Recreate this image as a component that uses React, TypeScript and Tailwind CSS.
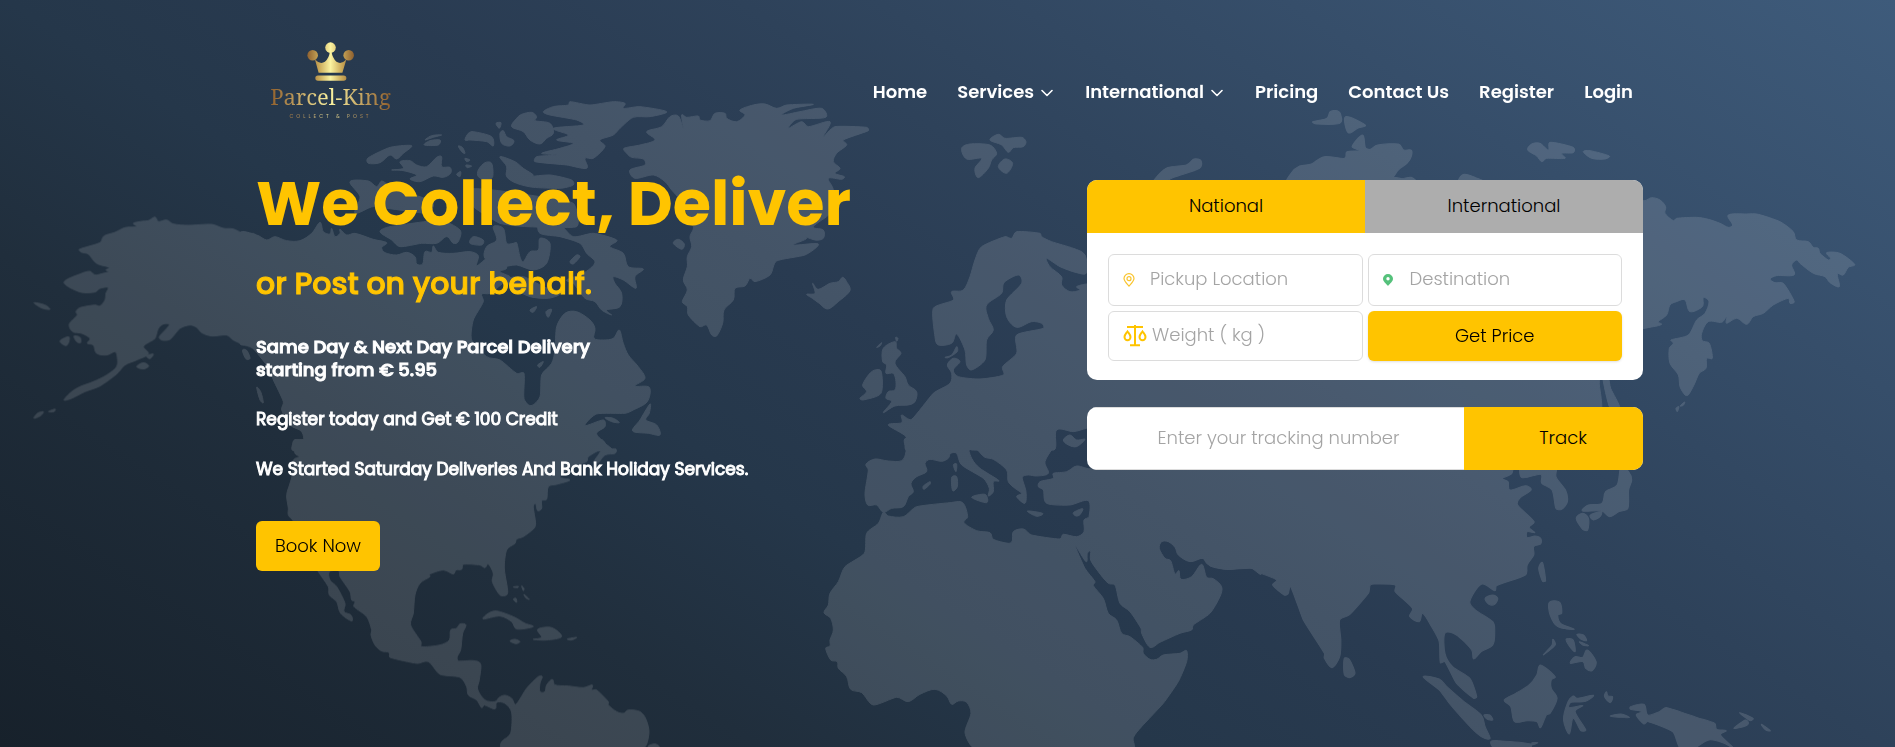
import { useState } from "react";

const alaska = [
  "M238,508 L300,488 L312,468 L345,457 L375,443 L410,440 L400,430 L425,424 L445,422 L465,411 L475,425 L500,420 L520,432 L565,436 L635,433 L670,445 L700,447 L735,463 L765,465 L765,800 L740,797 L700,780 L680,765 L635,768 L605,758 L590,742 L570,735 L540,745 L510,778 L485,780 L478,770 L508,735 L490,732 L475,745 L465,775 L450,785 L430,800 L445,822 L410,840 L375,855 L350,882 L300,918 L255,935 L215,955 L192,960 L215,935 L240,920 L280,905 L320,885 L350,860 L352,832 L345,815 L320,825 L290,820 L280,795 L262,790 L270,775 L245,760 L218,755 L208,732 L232,705 L228,695 L240,683 L285,675 L300,678 L315,660 L318,640 L325,622 L300,625 L285,636 L240,636 L192,607 L245,580 L270,574 L285,585 L310,580 L328,575 L318,570 L328,562 L290,550 L265,522 L245,517Z",
  "M102,668 L135,675 L150,688 L125,684Z M180,783 L205,770 L207,783 L198,797Z M102,1015 L112,1000 L130,995 L122,1007Z M145,995 L165,987 L162,995Z M410,860 L430,848 L446,858 L430,867Z M440,828 L460,822 L450,836Z M222,768 L240,772 L242,788 L230,785Z M728,810 L740,812 L748,835 L738,836Z",
];

const canada = [
  "M0,460 L50,465 L80,480 L105,470 L140,482 L180,482 L215,460 L240,427 L250,455 L270,462 L275,445 L285,470 L300,460 L300,448 L320,465 L345,460 L400,478 L440,488 L425,503 L435,518 L470,525 L500,517 L525,530 L530,552 L548,552 L555,515 L575,517 L580,498 L595,517 L640,520 L690,515 L715,527 L710,557 L740,535 L755,530 L790,545 L800,565 L780,575 L810,590 L800,600 L750,640 L725,642 L730,665 L700,720 L695,780 L740,830 L780,840 L830,880 L852,880 L852,955 L873,977 L900,950 L905,885 L935,850 L945,810 L950,740 L975,700 L1010,695 L1050,720 L1065,745 L1062,775 L1090,780 L1120,775 L1138,750 L1150,790 L1165,825 L1195,860 L1215,895 L1185,918 L1228,922 L1222,965 L1180,990 L1155,1000 L1070,1002 L1035,1037 L1090,1020 L1095,1040 L1070,1060 L1090,1085 L1115,1112 L160,1112 L165,1080 L190,1090 L185,1055 L150,1035 L125,990 L130,965 L100,900 L90,870 L60,830 L30,797 L0,790Z",
  "M1230,972 L1228,1000 L1218,1020 L1250,1035 L1260,1065 L1225,1060 L1178,1053 L1200,1020Z M1095,1013 L1120,1015 L1138,1028 L1115,1025Z M8,812 L20,812 L30,835 L18,836Z M50,922 L62,935 L70,968 L60,960Z",
  "M330,305 L385,303 L410,320 L425,303 L445,315 L500,340 L540,350 L580,370 L560,400 L400,380 L345,400 L360,350Z",
  "M420,455 L450,440 L600,420 L660,450 L655,485 L640,490 L620,470 L590,490 L545,490 L480,500 L455,480Z",
  "M455,270 L490,265 L480,245 L510,242 L530,255 L560,260 L590,232 L605,230 L605,260 L630,262 L632,280 L610,292 L580,288 L540,305 L510,297 L530,285 L490,272Z",
  "M383,235 L430,210 L460,200 L515,197 L490,220 L470,237 L450,225 L420,248 L385,250Z M553,195 L570,182 L600,180 L595,195Z M555,180 L575,167 L605,165 L580,172Z",
  "M675,180 L685,160 L700,155 L755,170 L760,198 L740,185 L690,180Z M780,160 L790,152 L800,170 L822,182 L810,198 L785,190Z M768,130 L783,128 L778,145Z M655,198 L668,203 L675,220 L665,215Z M675,235 L690,240 L680,245Z M678,255 L695,258 L682,263Z M650,283 L662,275 L660,290Z",
  "M715,270 L735,248 L755,250 L758,290 L740,300 L715,290Z M780,230 L825,245 L850,265 L880,285 L865,290 L930,285 L995,300 L1000,315 L960,325 L880,322 L830,310 L800,290 L800,260Z",
  "M815,140 L830,115 L845,103 L875,97 L890,110 L885,122 L930,130 L940,160 L920,175 L900,192 L870,180 L850,155Z",
  "M910,95 L940,80 L985,75 L990,65 L1050,75 L1120,65 L1155,70 L1150,85 L1200,80 L1280,95 L1230,110 L1180,112 L1140,145 L1120,165 L1080,180 L1095,200 L1060,235 L1035,235 L1040,265 L980,255 L885,245 L890,230 L950,225 L905,220 L960,205 L1000,190 L950,180 L985,165 L940,145 L1030,135 L1010,120 L930,105Z",
  "M680,330 L760,330 L900,350 L1000,370 L1010,440 L860,440 L780,430 L700,380Z",
  "M900,430 L960,435 L1000,470 L1060,460 L1130,480 L1110,500 L1150,520 L1165,560 L1210,567 L1185,590 L1188,625 L1150,600 L1120,590 L1125,610 L1145,640 L1140,680 L1100,690 L1115,705 L1085,690 L1065,665 L1035,655 L1000,610 L980,600 L1030,580 L1065,548 L1040,520 L1020,490 L960,470 L900,460Z",
  "M820,490 L830,488 L840,530 L850,545 L870,515 L895,510 L900,475 L930,490 L920,550 L880,570 L830,555 L780,560 L735,535 L740,500 L770,480 L760,440 L790,445 L800,490Z",
  "M800,598 L850,590 L910,620 L960,640 L925,655 L870,650 L820,625Z M870,690 L890,680 L880,697Z M918,695 L935,688 L925,712Z M690,490 L700,470 L730,480 L725,495Z M990,545 L1010,525 L1020,530 L1000,552Z M1300,490 L1315,478 L1333,492 L1325,508Z M893,855 L910,845 L900,862Z",
];

const atlantic = [
  "M72,205 L120,195 L165,180 L140,155 L185,140 L210,110 L235,108 L250,145 L245,105 L260,112 L295,108 L300,120 L330,122 L345,100 L375,100 L380,115 L410,125 L435,105 L420,90 L460,75 L495,72 L530,85 L560,75 L640,73 L580,85 L545,105 L600,95 L665,85 L677,112 L590,118 L565,145 L605,125 L625,140 L690,125 L670,170 L705,140 L800,142 L805,152 L730,180 L740,195 L710,220 L700,245 L720,265 L705,280 L733,290 L725,298 L685,295 L700,330 L690,400 L640,440 L670,450 L670,475 L645,480 L590,460 L620,475 L580,495 L655,492 L615,525 L530,543 L510,585 L465,605 L450,595 L435,618 L405,625 L400,660 L372,690 L368,730 L350,768 L335,765 L320,735 L300,740 L265,705 L262,680 L247,665 L262,630 L250,600 L262,560 L262,530 L275,500 L270,470 L280,440 L240,360 L215,330 L195,305 L160,285 L105,295 L90,270 L135,255 L130,237 L95,232 L80,220Z",
  "M620,643 L645,640 L638,610 L655,628 L690,610 L715,605 L728,592 L740,605 L750,632 L715,665 L683,687 L655,668 L637,655Z",
  "M1085,205 L1110,192 L1170,195 L1190,220 L1175,240 L1165,265 L1135,293 L1125,265 L1145,235 L1100,237Z M1170,180 L1195,163 L1215,175 L1265,172 L1278,185 L1270,200 L1240,203 L1225,217 L1205,195Z M1195,260 L1215,237 L1238,250 L1220,280Z",
  "M850,805 L885,785 L890,805 L903,820 L885,850 L915,890 L925,915 L950,935 L945,965 L925,975 L885,978 L850,998 L875,965 L858,955 L865,935 L885,930 L888,905 L880,880 L858,880 L860,855 L848,845Z M780,955 L800,935 L788,915 L815,875 L843,873 L843,940 L790,960Z M830,802 L845,788 L840,798Z M887,772 L894,775 L890,784Z",
  "M1035,832 L1055,825 L1070,800 L1072,815 L1045,833Z",
  "M1000,685 L1060,660 L1055,635 L1090,630 L1110,590 L1125,540 L1145,500 L1215,470 L1235,475 L1250,455 L1320,460 L1325,470 L1355,485 L1420,505 L1455,525 L1460,578 L1430,578 L1380,560 L1340,535 L1350,560 L1385,590 L1385,615 L1410,635 L1440,630 L1430,620 L1460,612 L1500,612 L1500,1040 L1460,1045 L1420,1055 L1370,1050 L1362,1110 L1115,1110 L1105,1083 L1110,1110 L920,1110 L918,1070 L865,1035 L905,1028 L905,1005 L935,1018 L1000,940 L1050,910 L1055,880 L1042,855 L1060,835 L1080,845 L1060,870 L1075,890 L1140,897 L1210,885 L1208,860 L1250,820 L1250,765 L1330,745 L1325,730 L1295,725 L1250,742 L1220,710 L1220,660 L1265,610 L1255,585 L1212,608 L1205,640 L1160,675 L1165,715 L1180,750 L1160,780 L1155,840 L1115,870 L1100,855 L1095,810 L1070,762 L1055,790 L1015,795 L1005,770Z",
  "M1390,1080 L1410,1065 L1430,1080 L1455,1078 L1430,1100 L1405,1095Z",
];

const americas = [
  "M165,0 L165,40 L178,50 L160,60 L158,100 L150,130 L140,165 L145,205 L145,225 L160,243 L232,390 L265,440 L268,465 L290,485 L302,520 L335,543 L333,525 L312,515 L315,490 L290,440 L270,420 L268,395 L295,390 L300,410 L330,455 L335,480 L345,485 L342,500 L380,530 L395,570 L393,585 L405,615 L425,633 L447,637 L450,652 L530,670 L565,665 L600,703 L660,712 L680,740 L685,765 L710,780 L725,803 L733,795 L765,807 L770,787 L795,790 L815,817 L812,880 L785,905 L785,925 L1208,925 L1227,880 L1218,838 L1200,815 L1165,810 L1150,820 L1130,815 L1105,795 L1105,785 L1070,750 L1055,750 L1057,735 L1030,743 L985,738 L945,735 L937,718 L920,735 L915,755 L900,755 L900,730 L907,710 L895,710 L860,745 L828,793 L815,775 L795,766 L778,772 L765,785 L735,780 L713,748 L718,720 L722,672 L700,662 L655,663 L652,650 L662,630 L668,580 L678,555 L660,552 L650,565 L632,570 L628,600 L600,615 L545,620 L543,605 L512,555 L520,520 L525,465 L540,430 L570,410 L568,403 L610,390 L640,402 L648,390 L665,388 L670,373 L720,375 L735,383 L745,372 L760,400 L757,425 L780,465 L800,465 L803,450 L793,385 L800,330 L825,310 L830,297 L850,290 L882,265 L887,250 L880,200 L887,190 L893,212 L905,205 L905,182 L920,178 L925,140 L950,133 L990,120 L960,110 L1000,80 L1040,65 L1045,50 L1083,30 L1060,68 L1075,68 L1095,45 L1125,40 L1128,27 L1105,25 L1085,0Z",
  "M730,537 L745,520 L770,513 L820,530 L855,550 L880,560 L830,567 L815,545 L780,528Z M880,598 L905,592 L893,568 L935,563 L965,590 L920,600Z M810,603 L825,598 L840,605 L828,611Z M982,597 L1010,592 L995,600Z M820,441 L835,439 L833,443Z M845,438 L852,445 L850,452Z M820,478 L828,475 L830,487Z M852,463 L868,478 L858,474Z M1225,918 L1245,912 L1258,921 L1230,925Z",
];

const africa = [
  "M378,-5 L378,35 L365,62 L325,63 L285,57 L258,72 L265,90 L255,160 L263,195 L290,195 L310,217 L335,205 L370,200 L385,170 L400,155 L393,130 L410,110 L440,95 L435,70 L450,58 L485,64 L505,55 L512,40 L530,40 L545,75 L610,115 L628,145 L625,168 L640,155 L640,125 L657,122 L600,85 L575,55 L560,5 L572,5 L600,38 L615,52 L640,58 L680,90 L685,125 L705,145 L725,160 L710,170 L735,190 L738,155 L727,112 L745,105 L770,108 L805,100 L795,65 L820,20 L822,-5Z",
  "M575,172 L615,163 L620,188Z M515,112 L530,110 L532,140 L518,152Z M520,75 L530,72 L528,95Z M430,138 L450,125 L450,133 L432,148Z M742,213 L788,220 L770,229Z M880,218 L908,206 L900,224 L888,228Z",
  "M780,125 L820,115 L820,100 L860,95 L890,78 L935,85 L935,40 L1445,40 L1445,400 L1410,383 L1340,388 L1290,378 L1270,355 L1230,365 L1195,345 L1185,322 L1165,305 L1145,305 L1138,325 L1155,355 L1172,362 L1185,402 L1197,392 L1203,418 L1235,410 L1265,373 L1280,412 L1300,416 L1325,440 L1320,470 L1290,520 L1240,555 L1235,570 L1200,580 L1140,607 L1110,622 L1085,580 L1083,565 L1050,515 L1020,490 L1005,435 L985,430 L955,395 L932,360 L932,333 L922,340 L918,365 L885,315 L915,385 L945,425 L940,437 L970,475 L985,520 L1010,540 L1025,580 L1050,590 L1088,622 L1090,640 L1110,658 L1130,658 L1150,645 L1200,640 L1220,632 L1220,665 L1195,725 L1150,790 L1085,860 L1060,893 L1060,925 L585,925 L555,878 L573,820 L560,787 L535,783 L515,793 L500,768 L465,748 L420,763 L385,785 L350,772 L280,795 L245,758 L212,748 L200,710 L175,685 L172,665 L152,660 L137,625 L150,618 L150,600 L160,570 L152,535 L132,518 L145,495 L150,460 L175,425 L195,380 L253,340 L260,280 L295,250 L310,217 L325,228 L370,230 L410,200 L510,188 L548,188 L563,230 L552,248 L590,272 L630,278 L640,298 L685,310 L697,303 L700,275 L730,267 L755,285 L840,297 L850,283 L890,290 L912,275 L912,240 L927,230 L925,182 L870,195 L800,190 L790,150 L775,140Z",
];

const asia = [
  "M-10,60 L-10,355 L8,355 L20,372 L70,388 L135,385 L160,400 L200,420 L190,435 L220,465 L230,462 L237,440 L270,540 L325,640 L325,655 L345,683 L365,650 L368,600 L365,540 L390,525 L440,460 L445,435 L460,432 L510,435 L510,455 L555,505 L548,530 L573,545 L582,520 L605,560 L625,605 L628,668 L640,665 L670,730 L715,775 L723,770 L705,715 L660,680 L640,640 L640,580 L670,585 L710,630 L715,657 L735,635 L765,615 L770,575 L765,545 L720,510 L705,485 L735,433 L770,452 L775,437 L850,405 L855,375 L872,345 L872,320 L890,312 L890,295 L875,288 L855,293 L855,275 L875,278 L860,262 L873,245 L830,195 L835,175 L865,150 L850,137 L810,150 L805,125 L790,115 L815,100 L820,60 L835,60 L840,112 L890,103 L893,130 L920,150 L930,205 L945,208 L960,185 L955,150 L930,110 L930,60Z",
  "M1100,80 L1120,95 L1128,120 L1120,150 L1118,205 L1095,215 L1070,230 L1050,213 L1000,213 L1015,195 L1050,190 L1060,155 L1090,135Z M983,235 L1000,220 L1015,235 L1013,270 L1000,268Z M1020,225 L1048,215 L1045,230 L1028,240Z",
  "M885,385 L895,368 L903,422 L895,424Z M745,475 L765,465 L778,475 L770,493 L755,493Z M377,655 L390,658 L405,700 L390,713 L377,703Z",
  "M583,710 L625,717 L645,740 L690,785 L735,825 L745,860 L758,895 L740,893 L710,865 L655,795 L625,750Z M742,825 L757,825 L765,840 L750,837Z",
  "M795,780 L825,760 L860,735 L880,705 L890,675 L928,710 L918,720 L918,745 L933,775 L915,820 L905,825 L890,863 L880,845 L855,842 L822,845 L812,800Z",
  "M975,768 L985,775 L1028,766 L1005,785 L970,787 L965,803 L1000,797 L980,815 L1008,870 L995,872 L975,835 L965,882 L950,840 L960,790Z",
  "M913,487 L940,487 L945,520 L935,525 L942,550 L978,568 L935,560 L915,525Z M957,597 L975,600 L980,635 L965,618Z M985,583 L1002,585 L1010,602 L995,597Z M992,605 L1015,617 L1000,615Z M968,670 L980,650 L1000,652 L1012,630 L1035,665 L1025,692 L1008,685 L1000,665Z M897,645 L920,615 L922,598 L928,615Z",
  "M1057,770 L1062,755 L1066,768 L1078,770 L1072,788Z M1072,828 L1100,822 L1122,833 L1095,832Z",
  "M1125,800 L1160,793 L1170,825 L1200,815 L1220,803 L1300,833 L1345,850 L1350,868 L1375,872 L1360,885 L1395,925 L1370,910 L1330,900 L1290,925 L1255,925 L1235,875 L1170,845 L1160,852 L1140,825 L1155,815 L1125,808Z",
  "M1395,865 L1425,840 L1433,848 L1425,858Z M1410,818 L1445,835 L1437,842Z M1467,853 L1490,872 L1478,870Z M760,905 L780,902 L865,912 L860,925 L770,925Z M868,908 L883,908 L870,914Z",
];

const siberia = [
  "M400,212 L435,212 L455,203 L480,210 L497,230 L495,250 L520,272 L530,265 L590,262 L625,268 L660,280 L685,292 L698,285 L685,255 L740,252 L775,253 L840,275 L880,305 L890,330 L925,335 L940,352 L955,355 L960,370 L985,390 L992,385 L980,368 L1020,370 L1064,403 L1045,412 L1030,435 L1012,432 L1018,470 L990,458 L975,440 L940,430 L900,400 L890,390 L875,405 L882,435 L830,437 L810,447 L825,458 L850,460 L883,515 L870,520 L865,505 L820,525 L790,550 L760,560 L740,583 L710,565 L680,580 L680,560 L665,577 L625,575 L605,610 L607,632 L628,640 L637,685 L620,685 L618,715 L598,730 L582,765 L565,795 L555,795 L540,770 L535,735 L510,700 L508,655 L520,640 L513,630 L565,615 L590,570 L615,550 L627,515 L610,503 L607,530 L570,545 L555,510 L530,515 L510,525 L500,555 L475,575 L485,583 L460,590 L400,592Z",
  "M83,60 L95,42 L120,40 L145,60 L150,37 L220,52 L220,68 L185,70 L195,85 L140,85 L125,95 L110,78Z M250,65 L270,62 L328,78 L315,87 L275,85Z M528,835 L537,830 L532,845Z M540,828 L554,816 L550,826Z M308,740 L325,745 L332,775 L360,835 L330,835Z",
  "M-1240,730 L290,730 L298,765 L300,850 L-1240,850Z",
];

const arctic = [
  "M888,185 L915,175 L922,155 L935,152 L942,165 L940,190 L895,192Z M952,170 L990,195 L975,205 L957,218Z",
  "M965,260 L985,225 L990,262 L1000,268 L1015,255 L1055,252 L1065,270 L1080,270 L1080,290 L1072,310 L1055,330 L1045,350 L1030,370 L840,370 L845,340 L862,318 L885,312 L910,290 L950,295 L955,275 L980,272Z",
  "M573,370 L600,325 L640,315 L655,297 L668,302 L665,325 L615,352 L590,370Z M1045,352 L1062,356 L1080,352 L1090,370 L1045,370Z M1175,355 L1185,343 L1205,352 L1228,370 L1175,370Z",
];

const regions = [
  { paths: alaska, transform: "translate(0 80) scale(0.3333)" },
  { paths: canada, transform: "translate(240 80) scale(0.3333)" },
  { paths: atlantic, transform: "translate(600 80) scale(0.3333)" },
  { paths: americas, transform: "translate(240 440) scale(0.3333)" },
  { paths: africa, transform: "translate(780 440) scale(0.3333)" },
  { paths: asia, transform: "translate(1200 440) scale(0.3827 0.3333)" },
  { paths: siberia, transform: "translate(1500 130) scale(0.3333)" },
  { paths: arctic, transform: "translate(860 60) scale(0.5102 0.3333)" },
];

type Point = [number, number];

// Rounds a closed coastline: each vertex stays put, the edges between become curves.
function smoothRing(points: Point[]): string {
  const n = points.length;
  const handle = (a: Point, p: Point, b: Point, reach: number, sign: number): Point => {
    const dx = b[0] - a[0];
    const dy = b[1] - a[1];
    const len = Math.hypot(dx, dy) || 1;
    const size = Math.min(len / 6, reach / 3) * sign;
    return [p[0] + (dx / len) * size, p[1] + (dy / len) * size];
  };
  let out = `M${points[0][0]} ${points[0][1]}`;
  for (let i = 0; i < n; i++) {
    const before = points[(i + n - 1) % n];
    const from = points[i];
    const to = points[(i + 1) % n];
    const after = points[(i + 2) % n];
    const reach = Math.min(Math.hypot(to[0] - from[0], to[1] - from[1]), 40);
    const c1 = handle(before, from, to, reach, 1);
    const c2 = handle(from, to, after, reach, -1);
    out += `C${c1[0].toFixed(1)} ${c1[1].toFixed(1)} ${c2[0].toFixed(1)} ${c2[1].toFixed(1)} ${to[0]} ${to[1]}`;
  }
  return out + "Z";
}

function coastline(path: string): string {
  return path
    .split("Z")
    .filter((ring) => ring.trim())
    .map((ring) =>
      smoothRing(
        ring
          .trim()
          .slice(1)
          .split("L")
          .map((pair) => pair.trim().split(",").map(Number) as Point),
      ),
    )
    .join("");
}

function WorldMap() {
  return (
    <svg
      className="absolute inset-0 h-full w-full"
      viewBox="0 0 1895 747"
      preserveAspectRatio="xMidYMin slice"
      aria-hidden="true"
    >
      <g fill="#fff" stroke="#fff" strokeWidth="3" strokeLinejoin="round" opacity="0.13">
        {regions.map((region) => (
          <g key={region.transform} transform={region.transform}>
            {region.paths.map((d) => (
              <path key={d} d={coastline(d)} />
            ))}
          </g>
        ))}
      </g>
    </svg>
  );
}

function Logo() {
  return (
    <a href="#" className="flex w-[121px] flex-col items-center">
      <svg className="h-[39px] w-[47px]" viewBox="202 37 140 118" aria-hidden="true">
        <defs>
          <linearGradient id="gold" x1="202" x2="342" y1="0" y2="0" gradientUnits="userSpaceOnUse">
            <stop offset="0" stopColor="#8f6130" />
            <stop offset="0.25" stopColor="#c9a757" />
            <stop offset="0.5" stopColor="#fbf3a0" />
            <stop offset="0.75" stopColor="#c9a757" />
            <stop offset="1" stopColor="#8f6130" />
          </linearGradient>
        </defs>
        <g fill="url(#gold)">
          <circle cx="272" cy="54" r="16" />
          <circle cx="218" cy="77" r="16" />
          <circle cx="327" cy="77" r="16" />
          <path d="M225,90 Q240,106 255,97 Q268,86 270,66 L275,66 Q278,86 290,97 Q305,106 320,90 L308,130 H236Z" />
          <rect x="226" y="138" width="94" height="16" rx="8" />
        </g>
      </svg>
      <span className="bg-linear-to-r from-[#8f5f2c] via-[#fbf3a0] to-[#8f5f2c] bg-clip-text font-['Noto_Serif','Liberation_Serif',serif] text-[22px] leading-[31px] whitespace-nowrap text-transparent">
        Parcel-King
      </span>
      <span className="mt-px bg-linear-to-r from-[#a87a42] via-[#e6dd98] to-[#a87a42] bg-clip-text text-[5px] leading-[8px] tracking-[3px] whitespace-nowrap text-transparent">
        COLLECT &amp; POST
      </span>
    </a>
  );
}

const links = [
  { label: "Home" },
  { label: "Services", menu: true },
  { label: "International", menu: true },
  { label: "Pricing" },
  { label: "Contact Us" },
  { label: "Register" },
  { label: "Login" },
];

function Chevron() {
  return (
    <svg
      className="mt-[2px] mr-[2px] h-[8px] w-[12px]"
      viewBox="0 0 12 8"
      fill="none"
      stroke="currentColor"
      strokeWidth="1.6"
      strokeLinecap="round"
      strokeLinejoin="round"
      aria-hidden="true"
    >
      <path d="M1 1.500 L6 6.500 L11 1.500" />
    </svg>
  );
}

function PinOutline() {
  return (
    <svg className="h-[14px] w-[12px] shrink-0" viewBox="0 0 12 14" fill="none" stroke="#f9c42c" aria-hidden="true">
      <path d="M6 13 C4 10.8 1 8.2 1 5.6 A5 5 0 0 1 11 5.6 C11 8.2 8 10.8 6 13Z" strokeWidth="1.2" />
      <circle cx="6" cy="5.7" r="2" strokeWidth="1.2" />
    </svg>
  );
}

function PinSolid() {
  return (
    <svg className="h-[12px] w-[10px] shrink-0" viewBox="0 0 10 12" fill="#55c17b" fillRule="evenodd" aria-hidden="true">
      <path d="M5 12 C3 9.5 0 7.5 0 4.8 A5 4.8 0 0 1 10 4.8 C10 7.5 7 9.5 5 12Z M5 3 A1.7 1.7 0 1 0 5 6.4 A1.7 1.7 0 1 0 5 3Z" />
    </svg>
  );
}

function Scales() {
  return (
    <svg className="h-[22px] w-[24px] shrink-0" viewBox="0 0 24 22" fill="none" stroke="#ffc400" strokeWidth="2" aria-hidden="true">
      <path d="M4 2 H20 M12 0 V20 M7 20.200 H17" />
      <path d="M4.500 6.500 C3 8.500 1.500 10 1.500 12 A3 3.200 0 0 0 7.500 12 C7.500 10 6 8.500 4.500 6.500Z M19.500 6.500 C18 8.500 16.500 10 16.500 12 A3 3.200 0 0 0 22.500 12 C22.500 10 21 8.500 19.500 6.500Z" />
    </svg>
  );
}

const field = "flex items-center rounded-md border border-[#dcdcdc] bg-white pl-[14px]";
const input =
  "w-full min-w-0 bg-transparent pb-[3px] text-[18px] font-light text-[#222] outline-none placeholder:text-[#a4a4a4]";

function QuoteCard() {
  const [tab, setTab] = useState("National");
  return (
    <section className="overflow-hidden rounded-[10px] bg-white">
      <div className="grid grid-cols-2">
        {["National", "International"].map((name) => (
          <button
            key={name}
            type="button"
            onClick={() => setTab(name)}
            className={
              tab === name
                ? "h-[53px] bg-[#ffc400] pb-[2px] text-[18px] font-light text-black"
                : "h-[53px] bg-[#adadad] pb-[2px] text-[18px] font-light text-black"
            }
          >
            {name}
          </button>
        ))}
      </div>
      <form className="grid grid-cols-2 gap-[5px] px-[21px] pt-[21px] pb-[19px]" onSubmit={(e) => e.preventDefault()}>
        <label className={`${field} h-[52px] gap-[15px]`}>
          <PinOutline />
          <input className={input} placeholder="Pickup Location" aria-label="Pickup Location" />
        </label>
        <label className={`${field} h-[52px] gap-[17px]`}>
          <PinSolid />
          <input className={input} placeholder="Destination" aria-label="Destination" />
        </label>
        <label className={`${field} h-[50px] gap-[5px]`}>
          <Scales />
          <input className={input} placeholder="Weight ( kg )" aria-label="Weight in kilograms" />
        </label>
        <button
          type="submit"
          className="h-[50px] rounded-md bg-[#ffc400] pb-[2px] text-[18px] font-light text-black shadow-sm"
        >
          Get Price
        </button>
      </form>
    </section>
  );
}

export default function App() {
  return (
    <div className="relative min-h-screen overflow-hidden bg-[linear-gradient(33deg,#17212b_0%,#202e3c_25%,#25374a_38%,#293b51_50%,#2e425a_62%,#364e6a_80%,#3e5b7b_100%)] font-['Poppins','Inter',sans-serif]">
      <WorldMap />
      <div className="relative mx-auto max-w-[1419px] pr-[14px] pl-[18px]">
        <header className="flex items-start justify-between pt-[42px] pr-[10px] pl-[14px]">
          <Logo />
          <nav className="flex items-center gap-[30px] pt-[38px]">
            {links.map((link) => (
              <a
                key={link.label}
                href="#"
                className="flex items-center gap-[7px] text-[18px] leading-6 font-semibold text-white"
              >
                {link.label}
                {link.menu && <Chevron />}
              </a>
            ))}
          </nav>
        </header>
        <main className="grid grid-cols-[1fr_556px] items-start gap-8 pt-12">
          <div>
            <h1 className="text-[62px] leading-[70px] font-bold text-[#ffc400]">We Collect, Deliver</h1>
            <h2 className="mt-[25px] text-[30px] leading-[40px] font-medium text-[#ffc400] [-webkit-text-stroke:1px_#ffc400]">
              or Post on your behalf.
            </h2>
            <div className="mt-[31px] space-y-[27px] text-[17px] leading-[23px] font-normal text-white [-webkit-text-stroke:1px_#fff]">
              <p className="text-[18px] font-medium">
                Same Day &amp; Next Day Parcel Delivery
                <br />
                starting from € 5.95
              </p>
              <p>Register today and Get € 100 Credit</p>
              <p>We Started Saturday Deliveries And Bank Holiday Services.</p>
            </div>
            <button
              type="button"
              className="mt-[40px] h-[50px] w-[124px] rounded-md bg-[#ffc400] pb-[2px] text-[18px] font-light text-black"
            >
              Book Now
            </button>
          </div>
          <div className="space-y-[27px] pt-[11px]">
            <QuoteCard />
            <form
              className="flex h-[63px] overflow-hidden rounded-[10px] bg-white"
              onSubmit={(e) => e.preventDefault()}
            >
              <input
                className="min-w-0 flex-1 border-y border-[#dcdcdc] pb-[2px] pl-[6px] text-center text-[18px] font-light text-[#222] outline-none placeholder:text-[#a4a4a4]"
                placeholder="Enter your tracking number"
                aria-label="Tracking number"
              />
              <button type="submit" className="w-[179px] bg-[#ffc400] pb-[2px] pl-[19px] text-[18px] font-light text-black">
                Track
              </button>
            </form>
          </div>
        </main>
      </div>
    </div>
  );
}
